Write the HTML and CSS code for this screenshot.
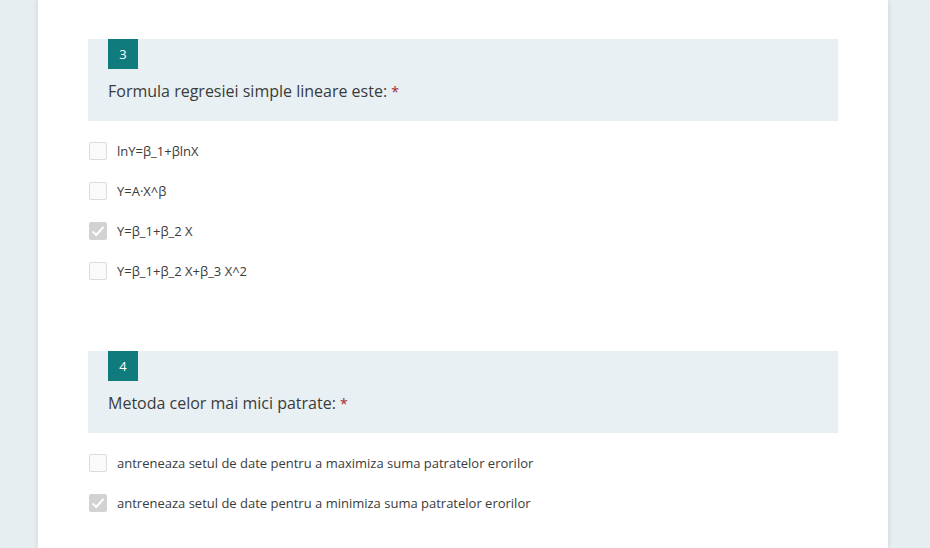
FILE: index.html
```html
<!DOCTYPE html>
<html>
<head>
<meta charset="utf-8">
<link rel="stylesheet" href="styles.css">
</head>
<body>
<div class="page">
  <div class="card">
    <section class="question">
      <div class="q-head">
        <div class="badge">3</div>
        <div class="q-title">Formula regresiei simple lineare este: <span class="req">*</span></div>
      </div>
      <ul class="options">
        <li class="opt"><span class="box"></span><span class="label">lnY=β_1+βlnX</span></li>
        <li class="opt"><span class="box"></span><span class="label">Y=A·X^β</span></li>
        <li class="opt"><span class="box checked"><svg viewBox="0 0 18 18" width="18" height="18"><path d="M3.5 9.5 L7.2 13 L14.5 4.8" fill="none" stroke="#fff" stroke-width="2"/></svg></span><span class="label">Y=β_1+β_2 X</span></li>
        <li class="opt"><span class="box"></span><span class="label">Y=β_1+β_2 X+β_3 X^2</span></li>
      </ul>
    </section>
    <section class="question">
      <div class="q-head">
        <div class="badge">4</div>
        <div class="q-title">Metoda celor mai mici patrate: <span class="req">*</span></div>
      </div>
      <ul class="options">
        <li class="opt"><span class="box"></span><span class="label">antreneaza setul de date pentru a maximiza suma patratelor erorilor</span></li>
        <li class="opt"><span class="box checked"><svg viewBox="0 0 18 18" width="18" height="18"><path d="M3.5 9.5 L7.2 13 L14.5 4.8" fill="none" stroke="#fff" stroke-width="2"/></svg></span><span class="label">antreneaza setul de date pentru a minimiza suma patratelor erorilor</span></li>
      </ul>
    </section>
  </div>
</div>
</body>
</html>
```
FILE: styles.css
```css
html, body {
  margin: 0;
  padding: 0;
  height: 100%;
  overflow: hidden;
}
body {
  background: #e6eef1;
  font-family: "Open Sans", "Noto Sans", sans-serif;
  color: #333;
}
.page {
  display: flex;
  justify-content: flex-start;
  padding-left: 38px;
  height: 100%;
}
.card {
  width: 850px;
  background: #fff;
  box-shadow: 0 0 6px rgba(0, 0, 0, 0.12);
  padding: 39px 50px 0 50px;
  box-sizing: border-box;
  height: 100%;
}
.question {
  margin-bottom: 71px;
}
.q-head {
  background: #e8f0f3;
  padding: 0 20px;
  height: 82px;
}
.badge {
  width: 30px;
  height: 30px;
  background: #0f7b7d;
  color: #fff;
  font-size: 13px;
  line-height: 30px;
  text-align: center;
  font-weight: 500;
}
.q-title {
  margin-top: 11px;
  font-size: 16px;
  line-height: 22px;
  color: #3b3b3b;
}
.req {
  color: #a4262c;
  font-size: 14px;
}
.options {
  list-style: none;
  margin: 0;
  padding: 21px 0 0 1px;
}
.opt {
  display: flex;
  align-items: center;
  height: 18px;
  margin-bottom: 22px;
}
.box {
  width: 16px;
  height: 16px;
  border: 1px solid #dcdcdc;
  border-radius: 2px;
  background: #fafafa;
  flex: none;
  position: relative;
}
.box.checked {
  background: #d2d2d2;
  border-color: #d2d2d2;
}
.box svg {
  position: absolute;
  left: -1px;
  top: -1px;
}
.label {
  margin-left: 10px;
  font-size: 13px;
  color: #3b3b3b;
}
```
